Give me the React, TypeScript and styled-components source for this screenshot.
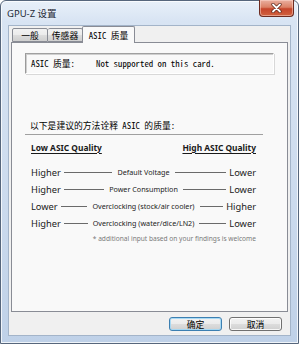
import React from 'react';
import styled, { createGlobalStyle } from 'styled-components';

const Global = createGlobalStyle`
  html, body { margin: 0; padding: 0; background: #ffffff; }
  body { width: 299px; height: 344px; overflow: hidden; }
  * { box-sizing: border-box; }
`;

const cjk = `"Noto Sans Mono CJK SC", "Noto Sans CJK SC", "Liberation Mono", monospace`;
const ui = `"Noto Sans", "Open Sans", "Noto Sans CJK SC", sans-serif`;

const Window = styled.div`
  width: 299px;
  height: 344px;
  border: 1px solid #56667c;
  border-radius: 6px 6px 0 0;
  background: linear-gradient(180deg, #e8f0f9 0%, #d8e4f3 6%, #cbdaed 60%, #bfd1e8 100%);
  box-shadow: inset 0 0 0 1px rgba(255, 255, 255, 0.75);
  padding: 0 7px 7px 7px;
  display: flex;
  flex-direction: column;
`;

const TitleBar = styled.div`
  height: 24px;
  display: flex;
  align-items: flex-start;
  justify-content: space-between;
`;

const Title = styled.div`
  font-family: "Noto Sans", "Noto Sans CJK SC", sans-serif;
  font-size: 9.5px;
  color: #1e2a38;
  margin-top: 5px;
  margin-left: -1px;
  text-shadow: 0 0 6px rgba(255, 255, 255, 0.9);
`;

const CloseButton = styled.div`
  width: 35px;
  height: 17px;
  margin-top: -1px;
  margin-right: -3px;
  border: 1px solid #6d2b20;
  border-top: none;
  border-radius: 0 0 4px 4px;
  background: linear-gradient(180deg, #eab0a0 0%, #db8166 45%, #c6452b 55%, #d0623f 100%);
  box-shadow: inset 0 0 0 1px rgba(255, 220, 210, 0.5);
  display: flex;
  align-items: center;
  justify-content: center;
`;

const Client = styled.div`
  flex: 1;
  background: #f0f0f0;
  border: 1px solid #a3b4c9;
  display: flex;
  flex-direction: column;
  padding: 0 2px 0 2px;
`;

const TabStrip = styled.div`
  height: 16px;
  display: flex;
  align-items: flex-end;
  padding-left: 1px;
  position: relative;
  z-index: 1;
`;

const Tab = styled.div<{ $active?: boolean; $w: number }>`
  width: ${(p) => p.$w}px;
  height: ${(p) => (p.$active ? 17 : 14)}px;
  margin-bottom: ${(p) => (p.$active ? -1 : 0)}px;
  margin-left: ${(p) => (p.$active ? -1 : 0)}px;
  border: 1px solid #898c95;
  border-bottom: ${(p) => (p.$active ? 'none' : '1px solid #898c95')};
  border-left: ${(p) => (p.$active ? '1px solid #898c95' : 'none')};
  border-radius: 2px 2px 0 0;
  background: ${(p) =>
    p.$active ? '#f9f9f9' : 'linear-gradient(180deg, #f2f2f2 0%, #ebebeb 50%, #dddddd 50%, #cfcfcf 100%)'};
  font-family: ${cjk};
  font-size: 8.8px;
  color: #000;
  display: flex;
  align-items: center;
  justify-content: center;
  padding-top: ${(p) => (p.$active ? 0 : 1)}px;
  white-space: pre;
  &:first-child {
    border-left: 1px solid #898c95;
  }
`;

const Panel = styled.div`
  height: 270px;
  border: 1px solid #898c95;
  background: #f9f9f9;
  padding: 10px 13px 0 13px;
  display: flex;
  flex-direction: column;
`;

const InfoBox = styled.div`
  height: 21px;
  border: 1px solid;
  border-color: #a0a0a0 #ffffff #ffffff #9a9a9a;
  box-shadow: inset 1px 1px 0 #cfcfcf, 1px 1px 0 #d8d8d8;
  display: flex;
  align-items: center;
  padding-left: 5px;
  font-family: ${cjk};
  font-size: 8.8px;
  color: #000;
  white-space: pre;
`;

const InfoLabel = styled.span`
  width: 65px;
`;

const Heading = styled.div`
  margin-top: 46px;
  width: 238px;
  padding: 0 0 2px 5px;
  border-bottom: 1px solid #a0a0a0;
  font-family: ${cjk};
  font-size: 8.8px;
  line-height: 12px;
  color: #000;
  white-space: pre;
`;

const Table = styled.div`
  margin: 6px 0 0 6px;
  width: 225px;
  display: flex;
  flex-direction: column;
  font-family: ${ui};
  color: #000;
`;

const HeaderRow = styled.div`
  height: 12px;
  display: flex;
  justify-content: space-between;
  align-items: center;
  margin-bottom: 10.5px;
`;

const HeaderLabel = styled.span`
  font-size: 8.4px;
  font-weight: 700;
  text-decoration: underline;
  text-underline-offset: 1.5px;
  color: #1a1a1a;
`;

const Row = styled.div`
  height: 17px;
  display: grid;
  grid-template-columns: 1fr auto 1fr;
  align-items: center;
`;

const Side = styled.div<{ $right?: boolean }>`
  display: flex;
  align-items: center;
  gap: 3px;
  flex-direction: ${(p) => (p.$right ? 'row-reverse' : 'row')};
`;

const Value = styled.span`
  font-size: 9.3px;
  color: #1a1a1a;
`;

const Line = styled.span`
  flex: 1;
  height: 0;
  border-top: 1px solid #6a6a6a;
`;

const Center = styled.span`
  font-size: 7.2px;
  color: #222;
  padding: 0 5px;
`;

const Note = styled.div`
  height: 13px;
  display: flex;
  align-items: center;
  justify-content: flex-end;
  font-size: 6.6px;
  color: #7a7a7a;
`;

const ButtonRow = styled.div`
  flex: 1;
  display: flex;
  justify-content: flex-end;
  align-items: flex-start;
  gap: 7px;
  padding: 5px 6px 0 0;
`;

const Button = styled.div<{ $default?: boolean }>`
  width: 53px;
  height: 14px;
  border: 1px solid ${(p) => (p.$default ? '#3c7fb1' : '#707070')};
  border-radius: 3px;
  background: linear-gradient(180deg, #f2f2f2 0%, #ebebeb 50%, #dddddd 50%, #cfcfcf 100%);
  box-shadow: inset 0 0 0 1px ${(p) => (p.$default ? 'rgba(160, 215, 245, 0.9)' : 'rgba(255, 255, 255, 0.8)')};
  display: flex;
  align-items: center;
  justify-content: center;
  font-family: ${cjk};
  font-size: 8.8px;
  color: #000;
`;

const rows = [
  { left: 'Higher', center: 'Default Voltage', right: 'Lower' },
  { left: 'Higher', center: 'Power Consumption', right: 'Lower' },
  { left: 'Lower', center: 'Overclocking (stock/air cooler)', right: 'Higher' },
  { left: 'Higher', center: 'Overclocking (water/dice/LN2)', right: 'Lower' },
];

export default function App() {
  return (
    <>
      <Global />
      <Window>
        <TitleBar>
          <Title>GPU-Z 设置</Title>
          <CloseButton>
            <svg width="11" height="10" viewBox="0 0 11 10">
              <path d="M2 1.5 L9 8.5 M9 1.5 L2 8.5" stroke="#5a2418" strokeWidth="3.2" strokeLinecap="round" />
              <path d="M2 1.5 L9 8.5 M9 1.5 L2 8.5" stroke="#ffffff" strokeWidth="1.8" strokeLinecap="round" />
            </svg>
          </CloseButton>
        </TitleBar>
        <Client>
          <TabStrip>
            <Tab $w={36}>一般</Tab>
            <Tab $w={35}>传感器</Tab>
            <Tab $w={53} $active>ASIC 质量</Tab>
          </TabStrip>
          <Panel>
            <InfoBox>
              <InfoLabel>ASIC 质量:</InfoLabel>
              <span>Not supported on this card.</span>
            </InfoBox>
            <Heading>以下是建议的方法诠释 ASIC 的质量:</Heading>
            <Table>
              <HeaderRow>
                <HeaderLabel>Low ASIC Quality</HeaderLabel>
                <HeaderLabel>High ASIC Quality</HeaderLabel>
              </HeaderRow>
              {rows.map((r, i) => (
                <Row key={i}>
                  <Side>
                    <Value>{r.left}</Value>
                    <Line />
                  </Side>
                  <Center>{r.center}</Center>
                  <Side $right>
                    <Value>{r.right}</Value>
                    <Line />
                  </Side>
                </Row>
              ))}
              <Note>* additional input based on your findings is welcome</Note>
            </Table>
          </Panel>
          <ButtonRow>
            <Button $default>确定</Button>
            <Button>取消</Button>
          </ButtonRow>
        </Client>
      </Window>
    </>
  );
}
